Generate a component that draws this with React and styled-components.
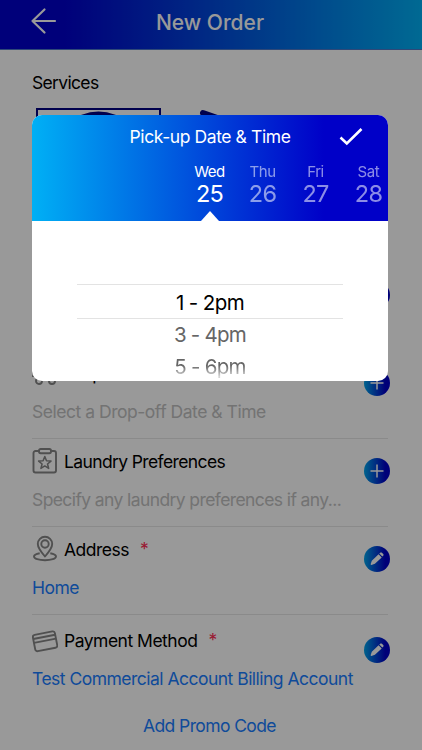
import React from "react";
import styled, { createGlobalStyle } from "styled-components";

const GlobalStyle = createGlobalStyle`
  * { box-sizing: border-box; }
  body { margin: 0; background: #fff; font-family: Inter, "Liberation Sans", sans-serif; }
`;

const Screen = styled.div`
  position: relative;
  width: 422px;
  height: 750px;
  overflow: hidden;
  background: #fff;
`;

const Text = styled.span`
  display: block;
  margin: 0;
  white-space: nowrap;
  font-size: ${(p) => p.$size || 17.5}px;
  line-height: ${(p) => p.$line || 24}px;
  letter-spacing: ${(p) => p.$track || 0}px;
  font-weight: ${(p) => p.$weight || 400};
  color: ${(p) => p.$color || "#000"};
`;

const Header = styled.header`
  display: grid;
  grid-template-columns: 86px 1fr 88px;
  align-items: center;
  height: 50px;
  padding-bottom: 4px;
  background: linear-gradient(90deg, #0000cc 15%, #00b0f5 100%);
  border-bottom: 1px solid #4d78c8;
`;

const BackButton = styled.div`
  display: flex;
  padding: 0 0 3px 30px;
`;

const Title = styled(Text)`
  text-align: center;
`;

const Services = styled.section`
  height: 212px;
  padding: 21px 32px 0;
`;

const ServiceIcons = styled.div`
  display: flex;
  gap: 36px;
  padding: 13px 0 0 4px;
`;

const Field = styled.section`
  display: grid;
  grid-template-columns: minmax(0, 1fr) 24px;
  height: ${(p) => (p.$tall ? 91 : 88)}px;
  margin: 0 34px 0 32px;
  padding-top: ${(p) => (p.$tall ? 14 : 11)}px;
  border-top: 1px solid #e6e6e6;
`;

const FieldTitle = styled.div`
  display: flex;
  align-items: center;
  height: 23px;
  svg { flex: none; margin: -2px 6px 0 0; }
`;

const Required = styled(Text)`
  margin: -1px 0 0 11px;
`;

const FieldValue = styled(Text)`
  margin-top: 15px;
`;

const RoundButton = styled.div`
  display: flex;
  align-items: center;
  justify-content: center;
  width: 26px;
  height: 26px;
  margin-top: 8px;
  border-radius: 50%;
  background: linear-gradient(90deg, #00a5eb 0%, #0000c8 82%);
`;

const Promo = styled(Text)`
  text-align: center;
  padding-right: 3px;
  margin-top: 9px;
`;

const Backdrop = styled.div`
  position: absolute;
  inset: 0;
  padding: 115px 34px 0 32px;
  background: rgba(0, 0, 0, 0.4);
`;

const Dialog = styled.div`
  height: 266px;
  overflow: hidden;
  border-radius: 10px;
  background: #fff;
`;

const DialogHead = styled.div`
  height: 106px;
  background: linear-gradient(90deg, #00b0f5 0%, #0000c8 82%);
`;

const DialogBar = styled.div`
  display: grid;
  grid-template-columns: 80px 1fr 80px;
  align-items: center;
  height: 44px;
  svg { justify-self: center; margin-left: 6px; }
`;

const Days = styled.div`
  display: flex;
  margin-left: 151px;
`;

const Day = styled.div`
  display: flex;
  flex: none;
  flex-direction: column;
  align-items: center;
  width: 53px;
  height: 62px;
  padding-top: 3px;
  opacity: ${(p) => (p.$active ? 1 : 0.55)};
`;

const Pointer = styled.div`
  margin-top: 5px;
  border: 9px solid transparent;
  border-top: 0;
  border-bottom: 10px solid #fff;
`;

const Wheel = styled.div`
  display: flex;
  flex-direction: column;
  margin: 0 45px;
  padding-top: 63px;
  text-align: center;
`;

const Slot = styled(Text)`
  height: ${(p) => (p.$active ? 35 : 32)}px;
  border: solid #e3e3e3;
  border-width: ${(p) => (p.$active ? "1px 0" : 0)};
`;

const FadedSlot = styled(Slot)`
  color: transparent;
  background: linear-gradient(#666 45%, #d5d5d5 80%);
  background-clip: text;
`;

const ArrowIcon = () => (
  <svg width="28" height="28" viewBox="0 0 28 28" fill="none" stroke="#fff" strokeWidth="2.2" strokeLinecap="round" strokeLinejoin="round">
    <path d="M25 14H2.500M14.500 2.500 2.500 14l12 11.500" />
  </svg>
);

const CheckIcon = () => (
  <svg width="24" height="20" viewBox="0 0 24 20" fill="none" stroke="#fff" strokeWidth="2.6">
    <path d="m1.500 10.500 6.300 6L22.500 2" />
  </svg>
);

const line = { width: 26, height: 28, viewBox: "0 0 26 28", fill: "none", stroke: "#858585", strokeWidth: 1.9, strokeLinejoin: "round" };

const TruckIcon = () => (
  <svg {...line}>
    <path d="M1 18V6h15v13M16 10h5l4 5v4M10 21h8" />
    <circle cx="7" cy="22" r="3" />
    <circle cx="20" cy="22" r="3" />
  </svg>
);

const BagIcon = () => (
  <svg {...line}>
    <path d="M4 9h18l1.500 15h-21zM8 12V7a5 5 0 0 1 10 0v5" />
  </svg>
);

const ClipboardIcon = () => (
  <svg {...line}>
    <path d="M7 4H3.500A2 2 0 0 0 1.500 6v17.500a2 2 0 0 0 2 2h18.500a2 2 0 0 0 2-2V6a2 2 0 0 0-2-2H19" />
    <rect x="7" y="2" width="12" height="4.200" rx="1.700" />
    <path strokeWidth="1.500" d="m12.800 9.500 1.700 4.300 4.500.3-3.500 2.900 1.200 4.400-3.900-2.500-3.900 2.500 1.200-4.400-3.500-2.900 4.500-.3z" />
  </svg>
);

const PinIcon = () => (
  <svg {...line}>
    <path d="M13 21.500C8.500 16.300 5.800 12.600 5.800 9a7.200 7.200 0 0 1 14.400 0c0 3.600-2.700 7.300-7.200 12.500z" />
    <circle cx="13" cy="9" r="3.700" />
    <path d="M7.700 18.200c-3.600.7-5.700 1.800-5.700 3.300 0 2.200 4.900 3.800 11 3.800s11-1.600 11-3.800c0-1.500-2.100-2.600-5.700-3.300" />
  </svg>
);

const CardIcon = () => (
  <svg {...line}>
    <g transform="rotate(-11 13 15)">
      <rect x="1.800" y="7" width="22.400" height="16.600" rx="2.200" />
      <path d="M1.800 10.800h22.400M1.800 14.800h22.400" />
    </g>
  </svg>
);

const PlusIcon = () => (
  <svg width="14" height="14" viewBox="0 0 14 14" stroke="#fff" strokeWidth="1.500">
    <path d="M7 .5v13M.5 7h13" />
  </svg>
);

const PencilIcon = () => (
  <svg width="14" height="14" viewBox="0 0 14 14" fill="#fff">
    <path d="M1.800 8.700 8.600 2.300l3.100 3.200-6.800 6.300-3.500 1.100c-.5.100-.9-.3-.7-.8z" />
    <path d="m9.300 1.600.9-.8c.5-.5 1.200-.5 1.700 0L13.200 2c.5.500.5 1.200 0 1.700l-.9.900z" />
  </svg>
);

const WasherIcon = () => (
  <svg width="125" height="70" viewBox="0 0 125 70" fill="none" stroke="#000080" strokeWidth="2">
    <path d="M1 70V1h123v69" />
    <circle cx="62.500" cy="45.500" r="39" strokeWidth="6" />
  </svg>
);

const HangerIcon = () => (
  <svg width="100" height="70" viewBox="0 0 100 70" fill="none" stroke="#000080" strokeWidth="6" strokeLinecap="round">
    <path d="m6 5 34 12 28 25" />
  </svg>
);

const BLUE = "#1a7dff";
const GREY = "#c0c0c0";

const fields = [
  { title: "Pick-up Date & Time", titleTrack: -0.41, value: "", icon: <BagIcon />, action: <PencilIcon /> },
  { title: "Drop-off Date & Time", titleTrack: -0.41, value: "Select a Drop-off Date & Time", icon: <TruckIcon />, action: <PlusIcon />, color: GREY, track: -0.475 },
  { title: "Laundry Preferences", titleTrack: -0.62, value: "Specify any laundry preferences if any...", icon: <ClipboardIcon />, action: <PlusIcon />, color: GREY, track: -0.6 },
  { title: "Address", titleTrack: -0.5, required: true, value: "Home", icon: <PinIcon />, action: <PencilIcon />, color: BLUE, track: -0.5 },
  { title: "Payment Method", titleTrack: -0.5, required: true, tall: true, value: "Test Commercial Account Billing Account", icon: <CardIcon />, action: <PencilIcon />, color: BLUE, track: -0.515 },
];

const days = [
  { name: "Wed", date: 25, active: true },
  { name: "Thu", date: 26 },
  { name: "Fri", date: 27 },
  { name: "Sat", date: 28 },
];

export default function App() {
  return (
    <>
      <GlobalStyle />
      <Screen>
        <Header>
          <BackButton><ArrowIcon /></BackButton>
          <Title as="h1" $size={21} $weight={550} $color="#fff">New Order</Title>
        </Header>
        <Services>
          <Text $track={-0.67}>Services</Text>
          <ServiceIcons><WasherIcon /><HangerIcon /></ServiceIcons>
        </Services>
        {fields.map((f) => (
          <Field key={f.title} $tall={f.tall}>
            <div>
              <FieldTitle>
                {f.icon}
                <Text $track={f.titleTrack}>{f.title}</Text>
                {f.required && <Required $color="#ff2d55">*</Required>}
              </FieldTitle>
              <FieldValue $color={f.color} $track={f.track}>{f.value}</FieldValue>
            </div>
            <RoundButton>{f.action}</RoundButton>
          </Field>
        ))}
        <Promo $color={BLUE} $track={-0.6}>Add Promo Code</Promo>
        <Backdrop>
          <Dialog>
            <DialogHead>
              <DialogBar>
                <span />
                <Title $color="#fff" $track={-0.41}>Pick-up Date & Time</Title>
                <CheckIcon />
              </DialogBar>
              <Days>
                {days.map((d) => (
                  <Day key={d.name} $active={d.active}>
                    <Text $size={15} $line={20} $track={-0.4} $color="#fff">{d.name}</Text>
                    <Text $size={23.5} $line={24} $track={-0.8} $color="#fff">{d.date}</Text>
                    {d.active && <Pointer />}
                  </Day>
                ))}
              </Days>
            </DialogHead>
            <Wheel>
              <Slot $active $size={20.5} $line={35} $track={-0.6}>1 - 2pm</Slot>
              <Slot $size={20.5} $line={32} $track={-0.75} $color="#666">3 - 4pm</Slot>
              <FadedSlot $size={20.5} $line={32} $track={-0.7}>5 - 6pm</FadedSlot>
            </Wheel>
          </Dialog>
        </Backdrop>
      </Screen>
    </>
  );
}
